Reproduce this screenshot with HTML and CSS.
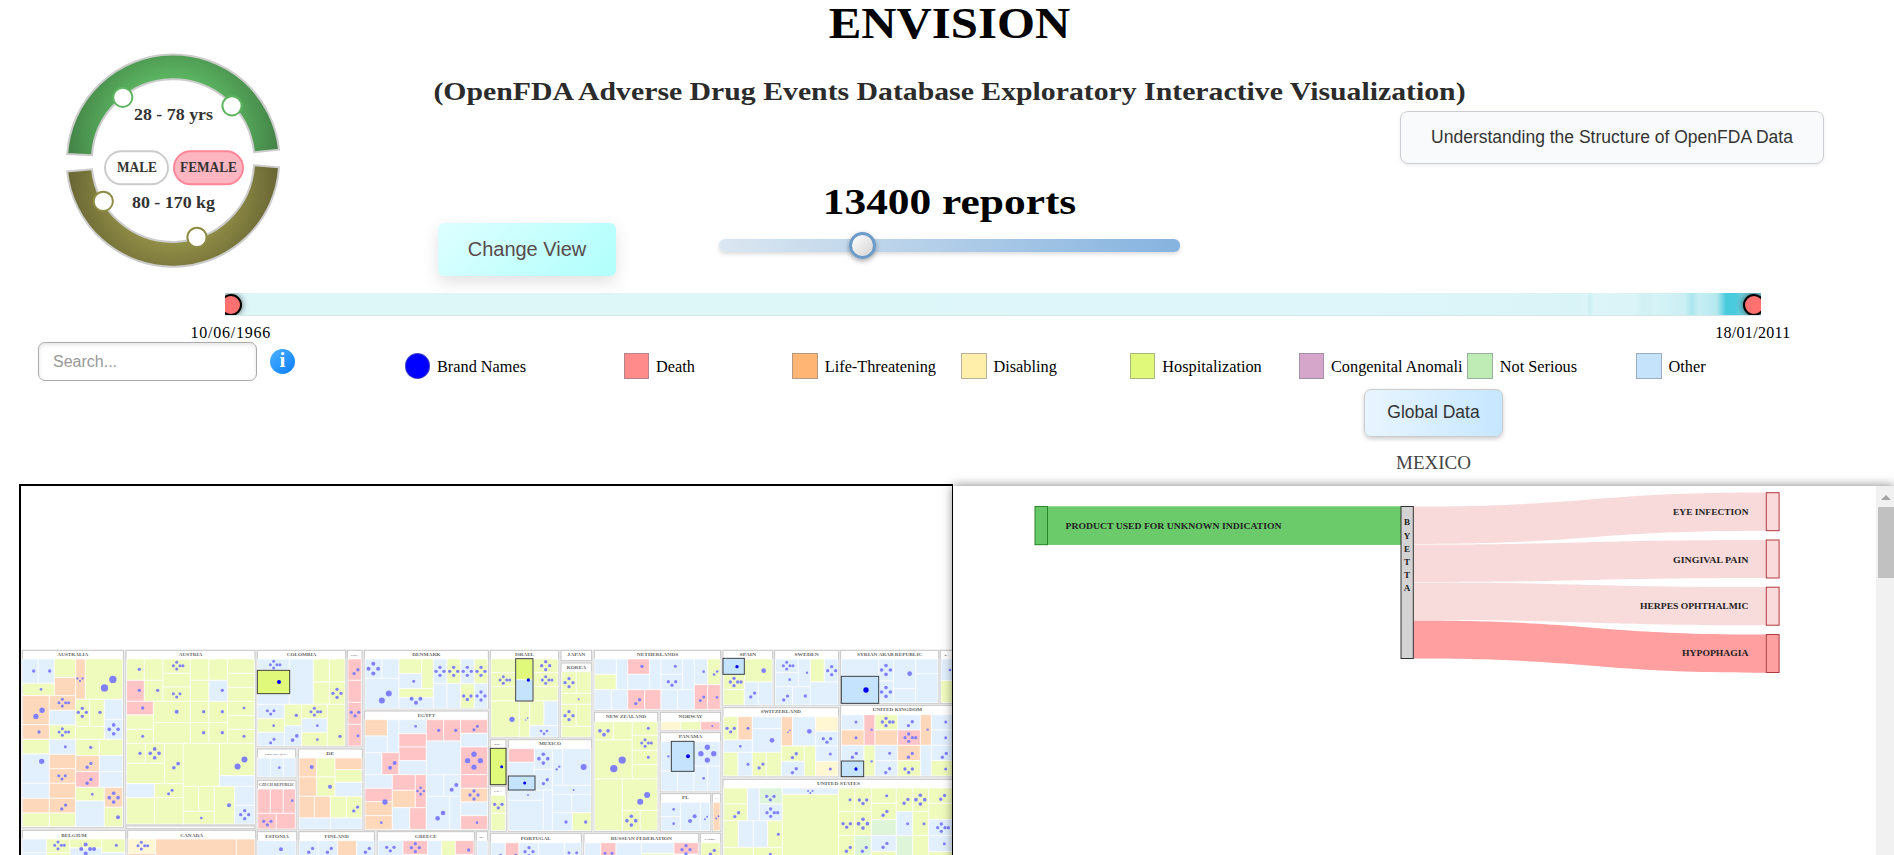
FILE: index.html
```html
<!DOCTYPE html>
<html lang="en">
<head>
<meta charset="utf-8">
<title>ENVISION</title>
<link rel="stylesheet" href="styles.css">
</head>
<body>
<div class="page">
  <header class="header">
    <svg class="dial" width="434" height="293" viewBox="0 0 434 293">
      <defs>
        <radialGradient id="age" gradientUnits="userSpaceOnUse" cx="173" cy="135" r="108">
          <stop offset="0.5" stop-color="#5db863"/><stop offset="1" stop-color="#428045"/>
        </radialGradient>
        <radialGradient id="weight" gradientUnits="userSpaceOnUse" cx="173" cy="186" r="108">
          <stop offset="0.5" stop-color="#949148"/><stop offset="1" stop-color="#666333"/>
        </radialGradient>
      </defs>
      <path fill="url(#age)" stroke="#ccc" stroke-width="2" d="M67.2 154A106.3 106.3 0 0 1 279 149.7L254 152.2A81.3 81.3 0 0 0 92 155.2Z"/>
      <path fill="url(#weight)" stroke="#ccc" stroke-width="2" d="M67.2 171.5A106.3 106.3 0 0 0 279 167.3L254 165.3A81.3 81.3 0 0 1 92 169.3Z"/>
      <g fill="#fff" stroke="#5db55f" stroke-width="2">
        <circle cx="122.8" cy="97.3" r="9.6"/><circle cx="232" cy="105.8" r="9.6"/>
      </g>
      <g fill="#fff" stroke="#8f8c45" stroke-width="2">
        <circle cx="103.3" cy="201.3" r="9.6"/><circle cx="197" cy="237.3" r="9.6"/>
      </g>
      <rect x="105" y="151.3" width="63" height="33" rx="16.5" fill="#fff" stroke="#ccc" stroke-width="2"/>
      <rect x="174" y="151.3" width="69" height="33" rx="16.5" fill="#ffb6c1" stroke="#ff8597" stroke-width="2"/>
      <g class="dial-text">
        <text x="134" y="120" textLength="79" lengthAdjust="spacingAndGlyphs">28 - 78 yrs</text>
        <text x="132" y="208" textLength="83" lengthAdjust="spacingAndGlyphs">80 - 170 kg</text>
        <text class="dial-sex" x="117" y="172" textLength="40" lengthAdjust="spacingAndGlyphs">MALE</text>
        <text class="dial-sex" x="180" y="172" textLength="57" lengthAdjust="spacingAndGlyphs">FEMALE</text>
      </g>
    </svg>
    <div class="titles">
      <h1>ENVISION</h1>
      <h2>(OpenFDA Adverse Drug Events Database Exploratory Interactive Visualization)</h2>
    </div>
    <button class="btn-view">Change View</button>
    <div class="reports">
      <div class="reports-count">13400 reports</div>
      <div class="slider"><span class="slider-thumb"></span></div>
    </div>
    <button class="btn-structure">Understanding the Structure of OpenFDA Data</button>
  </header>

  <div class="timeline">
    <span class="handle handle-start"></span>
    <span class="handle handle-end"></span>
  </div>
  <div class="dates"><span class="date-start">10/06/1966</span><span>18/01/2011</span></div>

  <div class="controls">
    <input class="search" placeholder="Search...">
    <span class="info">i</span>
    <ul class="legend">
      <li class="brand"><i class="k-brand"></i><span>Brand Names</span></li>
      <li><i class="k-death"></i><span>Death</span></li>
      <li><i class="k-life"></i><span>Life-Threatening</span></li>
      <li><i class="k-disabling"></i><span>Disabling</span></li>
      <li><i class="k-hospital"></i><span>Hospitalization</span></li>
      <li><i class="k-anomaly"></i><span>Congenital Anomali</span></li>
      <li><i class="k-mild"></i><span>Not Serious</span></li>
      <li><i class="k-other"></i><span>Other</span></li>
    </ul>
  </div>

  <div class="scope">
    <button class="btn-global">Global Data</button>
    <div class="country">MEXICO</div>
  </div>

  <main class="panels">
    <section class="map-panel">
      <svg id="treemap" width="931" height="369" viewBox="63 -462 2793 1107"></svg>
    </section>
    <section class="flow-panel">
      <svg class="flow" width="923" height="369" viewBox="953 486 923 369">
        <rect x="1035" y="506.3" width="366" height="38.6" fill="#6bcb6b"/>
        <g stroke="none">
          <path fill="#f9dada" d="M1413 506.5C1590 506.5 1590 492.6 1766 492.6V530.8C1590 530.8 1590 544 1413 544Z"/>
          <path fill="#f9dada" d="M1413 544.5C1590 544.5 1590 540 1766 540V578C1590 578 1590 582 1413 582Z"/>
          <path fill="#f8dcdc" d="M1413 582.6C1590 582.6 1590 587 1766 587V625.3C1590 625.3 1590 620 1413 620Z"/>
          <path fill="#ff9f9f" d="M1413 620.5C1590 620.5 1590 634.6 1766 634.6V672.8C1590 672.8 1590 658.6 1413 658.6Z"/>
        </g>
        <rect x="1035" y="506.5" width="12.5" height="38.2" fill="#66c766" stroke="#2a862a"/>
        <rect x="1401" y="506.5" width="12.3" height="152" fill="#d3d3d3" stroke="#333"/>
        <g stroke="#b23a3e">
          <rect x="1766.3" y="492.7" width="12.8" height="38" fill="#fadada"/>
          <rect x="1766.3" y="540" width="12.8" height="38" fill="#fadada"/>
          <rect x="1766.3" y="587.2" width="12.8" height="38" fill="#fadada"/>
          <rect x="1766.3" y="634.5" width="12.8" height="38" fill="#ffa0a0"/>
        </g>
        <g class="flow-text">
          <text x="1065.5" y="529" textLength="216" lengthAdjust="spacingAndGlyphs">PRODUCT USED FOR UNKNOWN INDICATION</text>
          <text x="1673" y="515.3" textLength="75.5" lengthAdjust="spacingAndGlyphs">EYE INFECTION</text>
          <text x="1673" y="562.5" textLength="75.5" lengthAdjust="spacingAndGlyphs">GINGIVAL PAIN</text>
          <text x="1640" y="609" textLength="108.5" lengthAdjust="spacingAndGlyphs">HERPES OPHTHALMIC</text>
          <text x="1682" y="656.3" textLength="66.5" lengthAdjust="spacingAndGlyphs">HYPOPHAGIA</text>
          <g text-anchor="middle">
            <text x="1407" y="525">B</text><text x="1407" y="538.5">Y</text><text x="1407" y="552">E</text>
            <text x="1407" y="565">T</text><text x="1407" y="578">T</text><text x="1407" y="591">A</text>
          </g>
        </g>
      </svg>
      <div class="scrollbar"><span class="scroll-up"></span><span class="scroll-thumb"></span></div>
    </section>
  </main>
</div>
<script src="treemap.js"></script>
</body>
</html>
```

FILE: styles.css
```css
* { box-sizing: border-box; }
body {
  margin: 0;
  background: #fff;
  color: #000;
  font-family: Georgia, "Liberation Serif", serif;
}
button { font-family: "Liberation Sans", Arial, sans-serif; margin: 0; padding: 0; }
.page { width: 1894px; height: 855px; overflow: hidden; display: flex; flex-direction: column; }

.header {
  display: grid;
  grid-template-columns: 438px 281px 461px 1fr;
  grid-template-rows: 111px 182px;
  height: 293px;
}
.dial { grid-area: 1 / 1 / 3 / 2; }
.dial-text { font-weight: bold; font-size: 16px; fill: #333; }
.dial-sex { font-size: 15px; }
.titles { grid-area: 1 / 1 / 2 / 5; text-align: center; padding-left: 5px; }
h1 { margin: 0; font-size: 45px; line-height: 46px; white-space: nowrap; transform: scaleX(1.085); }
h2 { margin: 32px 0 0; font-size: 25px; line-height: 28px; color: #2b2b2b; white-space: nowrap; transform: scaleX(1.19); }
.btn-view {
  grid-area: 2 / 2; width: 178px; height: 53px; margin-top: 112px;
  border: 0; border-radius: 6px; color: #5a4a4a; font-size: 20px;
  background: linear-gradient(135deg, #dff, #b0fffc);
  box-shadow: 0 6px 16px rgba(0, 0, 0, 0.12);
}
.reports { grid-area: 2 / 3; padding-top: 72px; }
.reports-count { text-align: center; font-size: 35px; font-weight: bold; line-height: 40px; white-space: nowrap; transform: scaleX(1.24); }
.slider {
  position: relative; height: 13px; margin-top: 16px; border-radius: 6px;
  background: linear-gradient(90deg, #dbe7f1, #85b3df);
  box-shadow: 0 2px 4px rgba(0, 0, 0, 0.15);
}
.slider-thumb {
  position: absolute; left: 130px; top: -7px; width: 27px; height: 27px;
  border: 3px solid #6c9bc9; border-radius: 50%;
  background: linear-gradient(135deg, #fff, #d4d4d4);
  box-shadow: 0 2px 5px rgba(0, 0, 0, 0.35);
}
.btn-structure {
  grid-area: 2 / 4; width: 424px; height: 53px; margin-left: 220px;
  border: 1px solid #cdcdd6; border-radius: 8px; background: #f9fafc;
  color: #333; font-size: 17.5px; white-space: nowrap;
  box-shadow: 0 2px 4px rgba(0, 0, 0, 0.06);
}

.timeline {
  position: relative; overflow: hidden; flex: none;
  width: 1536px; height: 23px; margin-left: 225px; border-bottom: 1px solid #d5e6e8;
  background: linear-gradient(90deg, #ddf6f8 0, #def6f9 1150px, #d9f4f7 1355px, #ddf5f8 1361px, #cbf0f3 1365px, #ddf5f8 1369px, #daf4f7 1410px, #d0f1f3 1419px, #d6f3f6 1430px, #caeff4 1460px, #abe6ee 1467px, #c8eff3 1474px, #b3e8ee 1492px, #47cbdd 1501px, #4bcbdd 1510px, #73cedb 1519px);
}
.handle {
  position: absolute; top: 0.5px; width: 22px; height: 22px; border-radius: 50%;
  background: #ff7070; border: 2px solid #000; box-shadow: 0 0 6px rgba(0, 0, 0, 0.6);
}
.handle-start { left: -5px; }
.handle-end { left: 1517.5px; }
.dates {
  display: flex; justify-content: space-between; flex: none;
  width: 1600px; height: 26px; margin-left: 190.5px; padding-top: 7px;
  font-size: 16px; line-height: 20px; letter-spacing: 0.3px;
}
.date-start { letter-spacing: 0.75px; }

.controls { display: flex; height: 46.5px; flex: none; padding-left: 38px; }
.search {
  width: 219px; height: 39px; padding: 0 14px; border: 1px solid #aaa; border-radius: 7px;
  font: 16px "Liberation Sans", Arial, sans-serif; box-shadow: inset 0 2px 4px rgba(0, 0, 0, 0.1);
}
.search::placeholder { color: #999; }
.info {
  width: 25px; height: 25px; margin: 7px 109.5px 0 13px; border-radius: 50%;
  background: linear-gradient(135deg, #4db2ff, #0a7cff); color: #fff;
  font-weight: bold; font-size: 21px; line-height: 23px; text-align: center;
}
.legend { display: flex; margin: 11px 0 0; padding: 0; list-style: none; font-size: 16.3px; line-height: 28px; }
.legend li { display: flex; width: 168.75px; height: 26px; white-space: nowrap; }
.legend li.brand { width: 219px; }
.legend i { width: 25.5px; height: 25.5px; margin-right: 7px; border: 1px solid rgba(120, 130, 140, 0.55); flex: none; }
.legend .k-brand { background: #00f; border-radius: 50%; }
.k-death { background: #ff8b8b; }
.k-life { background: #ffb573; }
.k-disabling { background: #ffefaa; }
.k-hospital { background: #e0f97a; }
.k-anomaly { background: #d5a5ca; }
.k-mild { background: #beecb4; }
.k-other { background: #c6e3fc; }

.scope { width: 921px; height: 95px; margin-left: 973px; flex: none; display: flex; flex-direction: column; align-items: center; }
.btn-global {
  width: 139px; height: 48px; border: 1px solid #ccc; border-radius: 7px;
  background: linear-gradient(90deg, #e8f5ff, #c6e7ff); color: #333; font-size: 17.5px;
  box-shadow: 0 2px 4px rgba(0, 0, 0, 0.2);
}
.country { margin-top: 15px; font-size: 19px; line-height: 22px; color: #444; }

.panels { display: flex; height: 372px; padding-left: 19px; flex: none; }
.map-panel { width: 934px; border: 2px solid #000; border-width: 2px 1px 0 2px; }
.map-panel svg { display: block; }
.flow-panel {
  position: relative; display: flex; width: 941px; height: 390px; margin-top: 2px;
  background: #fff; box-shadow: 0 0 10px rgba(0, 0, 0, 0.5);
}
.flow { display: block; flex: none; }
.flow-text { font-weight: bold; font-size: 9px; fill: #222; }
.scrollbar { width: 18px; background: #f1f1f1; display: flex; flex-direction: column; align-items: center; padding: 9px 0 0 2px; }
.scroll-up { border: 5px solid transparent; border-top: 0; border-bottom: 5px solid #a3a3a3; }
.scroll-thumb { width: 16px; height: 71px; margin-top: 7px; background: #c1c1c1; }

.frame { fill: #fff; stroke: #c6c6c6; stroke-width: 3; }
.cell { stroke: #fff; stroke-opacity: 0.7; stroke-width: 3; }
.picked { stroke: #222; stroke-opacity: 0.85; stroke-width: 3; }
.dot { fill: #8080ff; }
.dot-picked { fill: #0000f0; }
.label { font-weight: bold; fill: #666; text-anchor: middle; }
```

FILE: treemap.js
```js
// Cell: "<outcome> x1 y1 x2 y2"; dots: "<count> x y r". Units are thirds of a pixel.
const FILL = { g: '#effabd', b: '#e2f0fe', o: '#fed8ba', r: '#ffc4c5', y: '#fff6d4', n: '#def5d9', h: '#e0f97a', i: '#c5e3fc', G: '#e0f97a', B: '#c5e3fc', X: 'none' };

const strips = [
  [0, [
    ['AUSTRALIA', 67, 31, 370, 563, 93,
      'b 68 57 115 130;b 115 57 163 130;g 163 57 227 112;o 163 112 227 167;o 227 57 256 178;g 256 57 368 178;g 68 130 163 167;o 68 167 148 254;o 148 167 227 211;b 148 211 227 255;g 148 255 227 298;o 68 254 148 298;g 227 178 269 259;g 269 178 313 259;b 313 178 368 238;b 313 238 368 298;g 227 259 313 298;g 68 298 148 342;b 148 298 227 343;g 227 298 298 347;g 298 298 368 347;b 68 342 148 430;o 148 343 227 386;o 148 386 227 430;o 227 347 298 395;b 298 347 368 395;r 227 395 298 442;b 298 395 368 442;b 68 430 148 475;o 148 430 227 475;g 227 442 313 483;o 313 442 368 502;o 68 475 148 519;o 148 475 227 519;g 68 519 148 560;g 148 519 227 560;b 227 483 313 560;g 313 502 368 560',
      '1 101 93 5;1 149 93 5;1 123 148 4;3 240 119 3.5;2 326 131 11;2 117 220 8;5 187 188 4.5;5 187 276 4.5;1 117 276 5;4 247 217 5;1 300 217 5;4 341 268 5.5;1 196 320 4.5;1 272 322 5;1 125 364 8;2 267 376 5;3 186 412 4.5;2 267 424 5;1 277 463 4;4 341 473 5.5;2 191 501 5;1 354 532 6'],
    ['AUSTRIA', 378, 31, 765, 554, 70,
      'g 380 57 433 121;g 433 57 489 121;g 489 57 571 100;g 571 57 627 121;g 627 57 683 121;g 683 57 763 100;r 380 121 433 184;g 433 121 489 184;g 489 100 571 141;g 489 141 571 184;g 571 121 627 184;b 627 121 683 184;g 683 100 763 142;g 683 142 763 184;r 380 184 460 225;g 460 184 571 248;g 571 184 627 248;g 627 184 683 248;g 683 184 763 227;g 380 225 460 268;g 380 268 460 310;g 460 248 571 310;g 571 248 627 310;g 627 248 683 310;g 683 227 763 268;g 683 268 763 310;g 380 310 436 370;g 436 310 493 370;g 493 310 550 431;g 380 370 493 431;g 550 310 658 439;g 658 310 763 407;b 658 407 763 439;b 380 431 464 473;g 464 431 550 473;g 380 473 464 552;g 464 473 550 552;g 550 439 596 514;g 596 439 643 514;g 550 514 643 552;g 643 439 704 552;b 704 439 763 496;b 704 496 763 552',
      '1 418 88 5;5 530 77 4.5;1 418 151 5;1 473 151 5;3 530 166 4.5;1 667 151 5;1 428 204 5;1 530 215 6;1 611 215 5;1 667 215 5;1 732 204 4;1 428 289 4.5;1 611 278 5;1 667 278 5;1 732 289 4.5;1 420 340 5;4 464 340 5.5;2 528 377 5.5;2 723 369 9;2 511 456 4.5;1 687 496 6;1 604 534 4;4 734 524 5'],
    ['', 378, 558, 765, 566, 0, '', ''],
    ['BELGIUM', 67, 571, 377, 700, 76,
      'b 68 597 139 638;g 139 597 210 638;g 210 597 305 624;b 210 624 305 660;g 305 597 375 638;b 68 638 139 660;g 139 638 210 660;b 305 638 375 660',
      '5 174 616 4.5;5 257 627 6;1 349 616 4.5'],
    ['CANADA', 383, 571, 767, 700, 69,
      'y 384 597 467 640;o 467 597 709 660;o 709 597 765 660;o 384 640 467 660', '5 424 617 4.5'],
  ]],
  [750, [
    ['COLOMBIA', 22, 31, 287, 320, 88,
      'b 23 57 118 90;b 23 161 118 193;b 118 57 190 193;g 190 57 238 126;g 238 57 285 126;g 190 126 238 193;g 238 126 285 193;b 23 193 103 236;g 103 193 155 257;g 155 193 232 236;g 23 236 103 277;b 155 236 232 277;b 23 277 103 318;b 103 257 155 318;g 155 277 232 318;g 232 193 285 318;G 22 91 119 161',
      '5 71 74 4.5;*1 87 126 6;4 261 160 5;3 62 217 4.5;1 139 226 5;5 193 215 4.5;1 71 257 4;1 202 257 4;2 67 303 4.5;2 134 294 5.5;1 202 299 4;1 270 289 5'],
    ['COS...', 292, 31, 336, 320, 24, 'r 294 57 334 121;r 294 121 334 187;r 294 187 334 253;r 294 253 334 318', '2 318 95 5;3 315 222 5;1 324 287 4.5'],
    ['CROATIA (LO...', 22, 327, 137, 413, 70, 'b 23 354 61 411;b 61 354 100 411;b 100 354 136 411', '1 88 383 4'],
    ['CZECH REPUBLIC', 22, 421, 138, 569, 107, 'r 23 447 61 520;r 61 447 100 520;r 100 447 136 520;r 23 520 79 567;r 79 520 136 567', '1 127 482 4;3 52 549 5'],
    ['DE', 145, 327, 337, 569, 24,
      'o 147 354 200 411;g 200 354 255 411;o 255 354 336 389;g 255 389 336 427;o 147 411 200 469;g 200 411 255 469;b 255 427 336 469;o 147 469 193 534;o 193 469 241 534;g 241 469 289 534;g 289 469 336 534;b 147 534 241 567;b 241 534 336 567',
      '1 185 381 6;1 240 440 6;2 317 507 5'],
    ['DENMARK', 343, 31, 715, 206, 85,
      'b 345 57 396 115;b 396 57 447 115;b 345 115 447 205;g 447 57 515 101;g 515 57 550 146;b 447 101 515 146;g 447 146 550 173;b 447 173 550 205;b 550 57 591 131;g 591 57 632 131;b 632 57 673 131;g 673 57 713 131;b 550 131 591 205;b 591 131 632 205;g 632 131 673 205;b 673 131 713 205',
      '4 370 86 6;2 406 171 9;1 491 124 4.5;3 498 182 6;4 570 94 5;4 611 94 5;4 652 94 5;4 693 94 5;3 652 173 5;4 693 168 5'],
    ['EGYPT', 343, 213, 715, 570, 52,
      'o 345 239 412 288;b 412 239 447 338;b 447 239 529 281;r 529 239 581 303;r 581 239 632 303;r 632 239 713 280;b 345 288 412 338;r 447 281 529 321;r 447 321 529 362;b 529 303 632 404;b 632 280 713 321;r 632 321 713 404;b 345 338 396 404;r 396 338 447 404;b 447 362 529 404;b 345 404 427 445;r 345 445 427 485;o 345 485 427 527;o 345 527 427 568;r 427 404 496 451;o 427 451 496 503;r 496 404 529 503;b 427 503 479 568;r 479 503 529 568;b 529 404 581 469;b 581 404 632 469;b 529 469 599 568;b 599 469 632 568;r 632 404 713 445;o 632 445 713 486;b 632 486 713 527;r 632 527 713 568',
      '1 497 259 4;1 566 271 5;1 617 271 5;2 677 264 4.5;2 427 376 6;4 672 362 8;1 405 486 8;4 512 453 4;2 612 442 6;4 672 465 5;2 571 527 7;1 394 548 4;1 681 548 4'],
    ['ESTONIA', 22, 575, 140, 700, 71, 'b 23 602 138 660', '1 93 628 6'],
    ['FINLAND', 147, 575, 373, 700, 73, 'b 148 602 205 660;b 205 602 263 660;o 263 602 320 660;b 320 602 372 660', '2 182 631 5;2 238 631 5;2 352 631 5'],
    ['GREECE', 382, 575, 673, 700, 66, 'b 384 602 459 660;r 459 602 533 643;b 533 602 575 660;g 575 602 616 660;r 616 602 672 643', '3 421 627 5;4 496 623 5;1 656 630 5'],
    ['G...', 679, 575, 713, 700, 18, 'b 681 602 712 660', ''],
  ]],
  [1440, [
    ['ISRAEL', 31, 31, 236, 293, 57,
      'g 33 57 108 98;g 33 98 108 140;g 33 140 108 183;g 159 57 234 98;g 159 98 234 140;g 159 140 234 183;g 33 183 118 291;g 118 183 149 291;g 149 183 192 257;b 192 183 234 257;b 149 257 234 291;h 107 56 159 120;i 107 119 159 183;X 107 56 159 183',
      '5 70 120 4.5;4 197 77 5;5 197 120 4.5;1 96 238 8;2 140 237 2.5;3 192 277 4;*1 145 120 5'],
    ['JAPAN', 243, 31, 335, 62, 54, '', ''],
    ['KOREA', 243, 69, 335, 293, 58, 'g 245 95 289 160;g 289 95 333 160;g 245 160 333 193;g 245 193 289 259;g 289 193 333 259;g 245 259 333 291', '4 267 128 5;1 296 178 3;4 267 227 5'],
    ['KU...', 31, 299, 78, 434, 23, 'G 31 325 78 434', '*1 65 380 4.5'],
    ['LE...', 31, 439, 78, 574, 23, 'g 33 466 76 520;g 33 520 76 572', '3 55 498 5'],
    ['MEXICO', 85, 299, 335, 574, 66,
      'r 86 326 163 367;b 86 367 163 407;b 86 450 190 481;b 86 481 190 572;b 163 326 217 388;b 163 388 217 450;b 190 450 217 572;b 217 326 248 436;b 248 326 333 436;b 217 436 333 463;b 217 463 275 518;b 275 463 333 518;b 217 518 277 572;g 277 518 333 572;B 85 408 165 450',
      '*1 134 429 4.5;4 190 356 5.5;2 196 425 5;2 234 384 3.5;1 311 381 9;1 281 450 3;1 144 465 3;1 258 546 5;1 317 546 5'],
    ['NETHERLANDS', 343, 31, 722, 210, 124,
      'b 344 57 409 103;g 344 103 409 149;b 409 57 443 149;r 443 57 509 103;b 443 103 509 149;b 509 57 543 149;b 543 57 608 103;b 543 103 608 149;b 608 57 643 149;b 643 57 683 134;g 683 57 721 134;b 344 149 394 208;b 394 149 443 208;r 443 149 494 208;r 494 149 543 208;b 543 149 593 208;b 593 149 643 208;r 643 134 683 208;r 683 134 721 208',
      '1 486 79 5;1 586 79 4.5;3 576 130 5;2 473 185 5;1 671 95 4;2 707 99 4;2 666 176 4.5;1 711 172 4'],
    ['NEW ZEALAND', 343, 217, 533, 574, 121,
      'g 344 245 400 300;g 400 245 457 300;g 344 300 457 417;g 457 245 532 286;g 457 286 532 331;g 457 331 532 374;g 457 374 532 417;g 344 417 427 572;g 427 417 532 511;g 427 511 481 572;g 481 511 532 572',
      '3 372 278 5.5;1 505 265 4.5;5 495 309 4.5;2 414 373 11;1 505 352 4.5;2 491 475 9;4 454 542 5.5'],
    ['NORWAY', 541, 217, 722, 272, 72, 'y 543 245 602 270;g 602 245 662 270;r 662 245 720 270', '1 697 258 3'],
    ['PANAMA', 541, 278, 722, 455, 70,
      'b 543 305 574 393;b 642 305 720 378;b 543 393 593 453;b 593 393 642 453;b 642 378 683 453;b 683 378 720 453;B 574 304 642 394',
      '1 565 349 3.5;*1 624 349 6;4 682 341 8;1 671 415 4'],
    ['PL', 541, 461, 692, 574, 21, 'b 543 487 601 530;b 543 530 601 572;b 601 487 661 572;b 661 487 690 572', '1 581 508 4;1 581 551 4;2 637 536 6;2 678 534 3'],
    ['...', 697, 461, 722, 574, 9, 'o 699 487 720 572', '2 712 532 3'],
    ['PORTUGAL', 31, 580, 304, 700, 90, 'b 33 608 76 660;r 76 608 117 660;b 117 608 176 660;b 176 608 253 660;b 253 608 303 660', '4 147 635 5;1 267 638 4.5;1 290 638 4.5;1 62 645 4;1 107 645 4'],
    ['RUSSIAN FEDERATION', 312, 580, 656, 700, 184, 'b 314 608 362 660;r 362 608 408 660;b 408 608 484 660;b 484 608 582 640;r 582 608 655 642;g 484 640 582 660', '1 375 640 4.5;1 396 640 4.5;4 618 629 5'],
    ['SAUDI...', 661, 580, 722, 700, 36, 'g 663 608 720 660', '2 697 637 5'],
  ]],
  [2100, [
    ['SPAIN', 69, 31, 218, 196, 50, 'g 133 57 217 126;g 71 103 133 149;g 71 149 133 195;b 133 126 175 195;b 175 126 217 195;B 69 55 133 103', '*1 111 80 5;1 191 92 7;5 102 126 5;2 158 165 5'],
    ['SWEDEN', 224, 31, 416, 196, 73,
      'b 226 57 295 98;b 226 98 295 140;b 226 140 278 195;b 278 140 331 195;b 295 57 331 140;g 331 57 373 126;b 373 57 414 126;b 331 126 414 195',
      '5 260 77 4.5;1 269 119 4;1 321 98 3.5;4 395 92 5;2 257 174 5;1 316 168 5'],
    ['SYRIAN ARAB REPUBLIC', 422, 31, 716, 190, 196,
      'b 424 57 536 109;b 536 57 581 123;b 536 123 581 188;b 581 57 647 146;b 581 146 647 188;b 647 57 714 101;b 647 101 714 188;B 424 109 536 190',
      '*1 498 150 8;4 558 90 5.5;4 558 156 5.5;1 629 101 7'],
    ['T...', 721, 31, 758, 190, 14, 'b 723 57 770 122;g 723 122 770 188', '1 750 90 4'],
    ['SWITZERLAND', 69, 203, 416, 410, 121,
      'g 71 230 114 300;o 114 230 157 300;b 157 230 244 266;b 157 266 244 337;o 244 230 278 318;b 278 230 347 318;y 347 230 414 274;b 347 274 414 318;b 71 300 157 337;g 71 337 114 408;b 114 337 157 408;g 157 337 199 408;g 199 337 244 408;g 244 318 313 364;b 244 364 313 408;g 313 318 347 408;b 347 318 414 364;y 347 364 414 408',
      '3 92 270 5;1 144 265 4.5;1 216 301 7;2 267 274 2.5;1 328 274 7;3 381 301 5;1 121 319 4;1 144 373 4.5;2 183 378 5;2 283 347 5;2 283 392 5;1 391 342 4.5;1 391 387 4.5'],
    ['UNITED KINGDOM', 422, 196, 762, 410, 149,
      'b 424 224 492 270;r 492 224 525 316;g 525 224 593 270;b 593 224 661 270;o 661 224 694 316;b 694 224 760 270;o 424 270 492 316;o 525 270 593 316;r 593 270 661 316;b 694 270 760 316;b 424 316 492 362;g 492 316 525 408;b 525 316 593 362;o 593 316 661 362;b 661 316 694 408;b 694 316 760 362;b 525 362 593 408;g 593 362 661 408;g 694 362 760 408;B 424 363 491 410',
      '1 468 246 4.5;1 515 269 3.5;5 558 246 5;2 631 251 5;1 683 269 3.5;1 737 246 4.5;1 468 293 4.5;5 626 293 5;1 737 293 4.5;2 463 346 5;1 515 364 3.5;1 569 340 4.5;2 631 346 5;2 733 346 5;*1 468 387 5;2 563 392 5;3 626 392 5;1 737 387 4.5'],
    ['UNITED STATES', 69, 418, 762, 700, 129,
      'g 71 444 142 492;b 142 444 178 542;n 178 444 247 492;b 247 444 416 463;g 71 492 142 542;b 178 492 247 542;g 247 463 416 660;g 71 542 115 622;b 115 542 160 622;b 160 542 203 622;g 203 542 247 622;g 71 622 160 660;g 160 622 247 660;g 416 444 464 515;g 464 444 514 515;g 514 444 589 490;g 514 490 589 539;g 589 444 638 515;g 638 444 686 515;g 686 444 760 490;g 686 490 760 539;g 416 515 464 587;g 464 515 514 587;n 514 539 589 587;b 589 515 638 587;g 638 515 686 587;b 686 539 760 587;g 416 587 464 660;n 464 587 514 660;b 514 587 589 634;g 514 634 589 660;n 589 587 638 660;g 638 587 686 660;b 686 587 760 635;g 686 635 760 660',
      '3 211 474 5;2 110 524 5;5 212 518 5;3 331 456 3;1 235 583 4.5;1 211 643 4.5;1 450 479 4.5;3 489 485 5;1 560 467 4.5;2 555 520 5;2 618 484 5;4 661 479 5.5;2 728 472 5;3 440 556 5;4 489 551 5.5;1 623 551 4.5;1 672 551 4.5;5 724 563 5;2 445 628 5;2 493 628 5;2 555 616 5;1 733 611 4.5'],
  ]],
];

// Dot offsets from the cluster centre, in multiples of the dot radius.
const CLUSTER = {
  1: [[0, 0]],
  2: [[-1.15, 1.15], [1.15, -1.15]],
  3: [[-2.2, -1], [0, 1.1], [2.2, -1]],
  4: [[-2.4, 0], [2.4, 0], [0, -2.4], [0, 2.4]],
  5: [[-2.2, 0], [2.2, 0], [0, -2.2], [0, 2.2], [4.2, 0]],
};

const split = s => s ? s.split(';').map(t => t.split(' ')) : [];
const rect = (cls, fill, x1, y1, x2, y2) =>
  `<rect class="${cls}"${fill ? ` fill="${fill}"` : ''} x="${x1}" y="${y1}" width="${x2 - x1}" height="${y2 - y1}"/>`;

let out = '<rect x="65" y="29" width="2791" height="640" fill="#ececec"/>';
for (const [dx, countries] of strips) {
  out += `<g transform="translate(${dx} 0)">`;
  for (const [name, x1, y1, x2, y2, w, cells, dots] of countries) {
    out += rect('frame', '', x1, y1, x2, y2);
    if (name) {
      const size = Math.min(15, 1.7 * w / name.length);
      const cx = name === 'UNITED KINGDOM' ? 592 : (x1 + x2) / 2;
      const base = y1 + (y1 > 570 ? 19 : 17);
      out += `<text class="label" x="${cx}" y="${base}" font-size="${size}" textLength="${w}" lengthAdjust="spacingAndGlyphs">${name}</text>`;
    }
    for (const [k, ...r] of split(cells)) out += rect(k < 'a' ? 'picked' : 'cell', FILL[k], ...r.map(Number));
    for (const [k, ...r] of split(dots)) {
      const [cx, cy, rad] = r.map(Number);
      const picked = k[0] === '*';
      for (const [ox, oy] of CLUSTER[k.replace('*', '')])
        out += `<circle class="${picked ? 'dot-picked' : 'dot'}" cx="${cx + ox * rad}" cy="${cy + oy * rad}" r="${rad}"/>`;
    }
  }
  out += '</g>';
}
document.getElementById('treemap').innerHTML = out;
```
